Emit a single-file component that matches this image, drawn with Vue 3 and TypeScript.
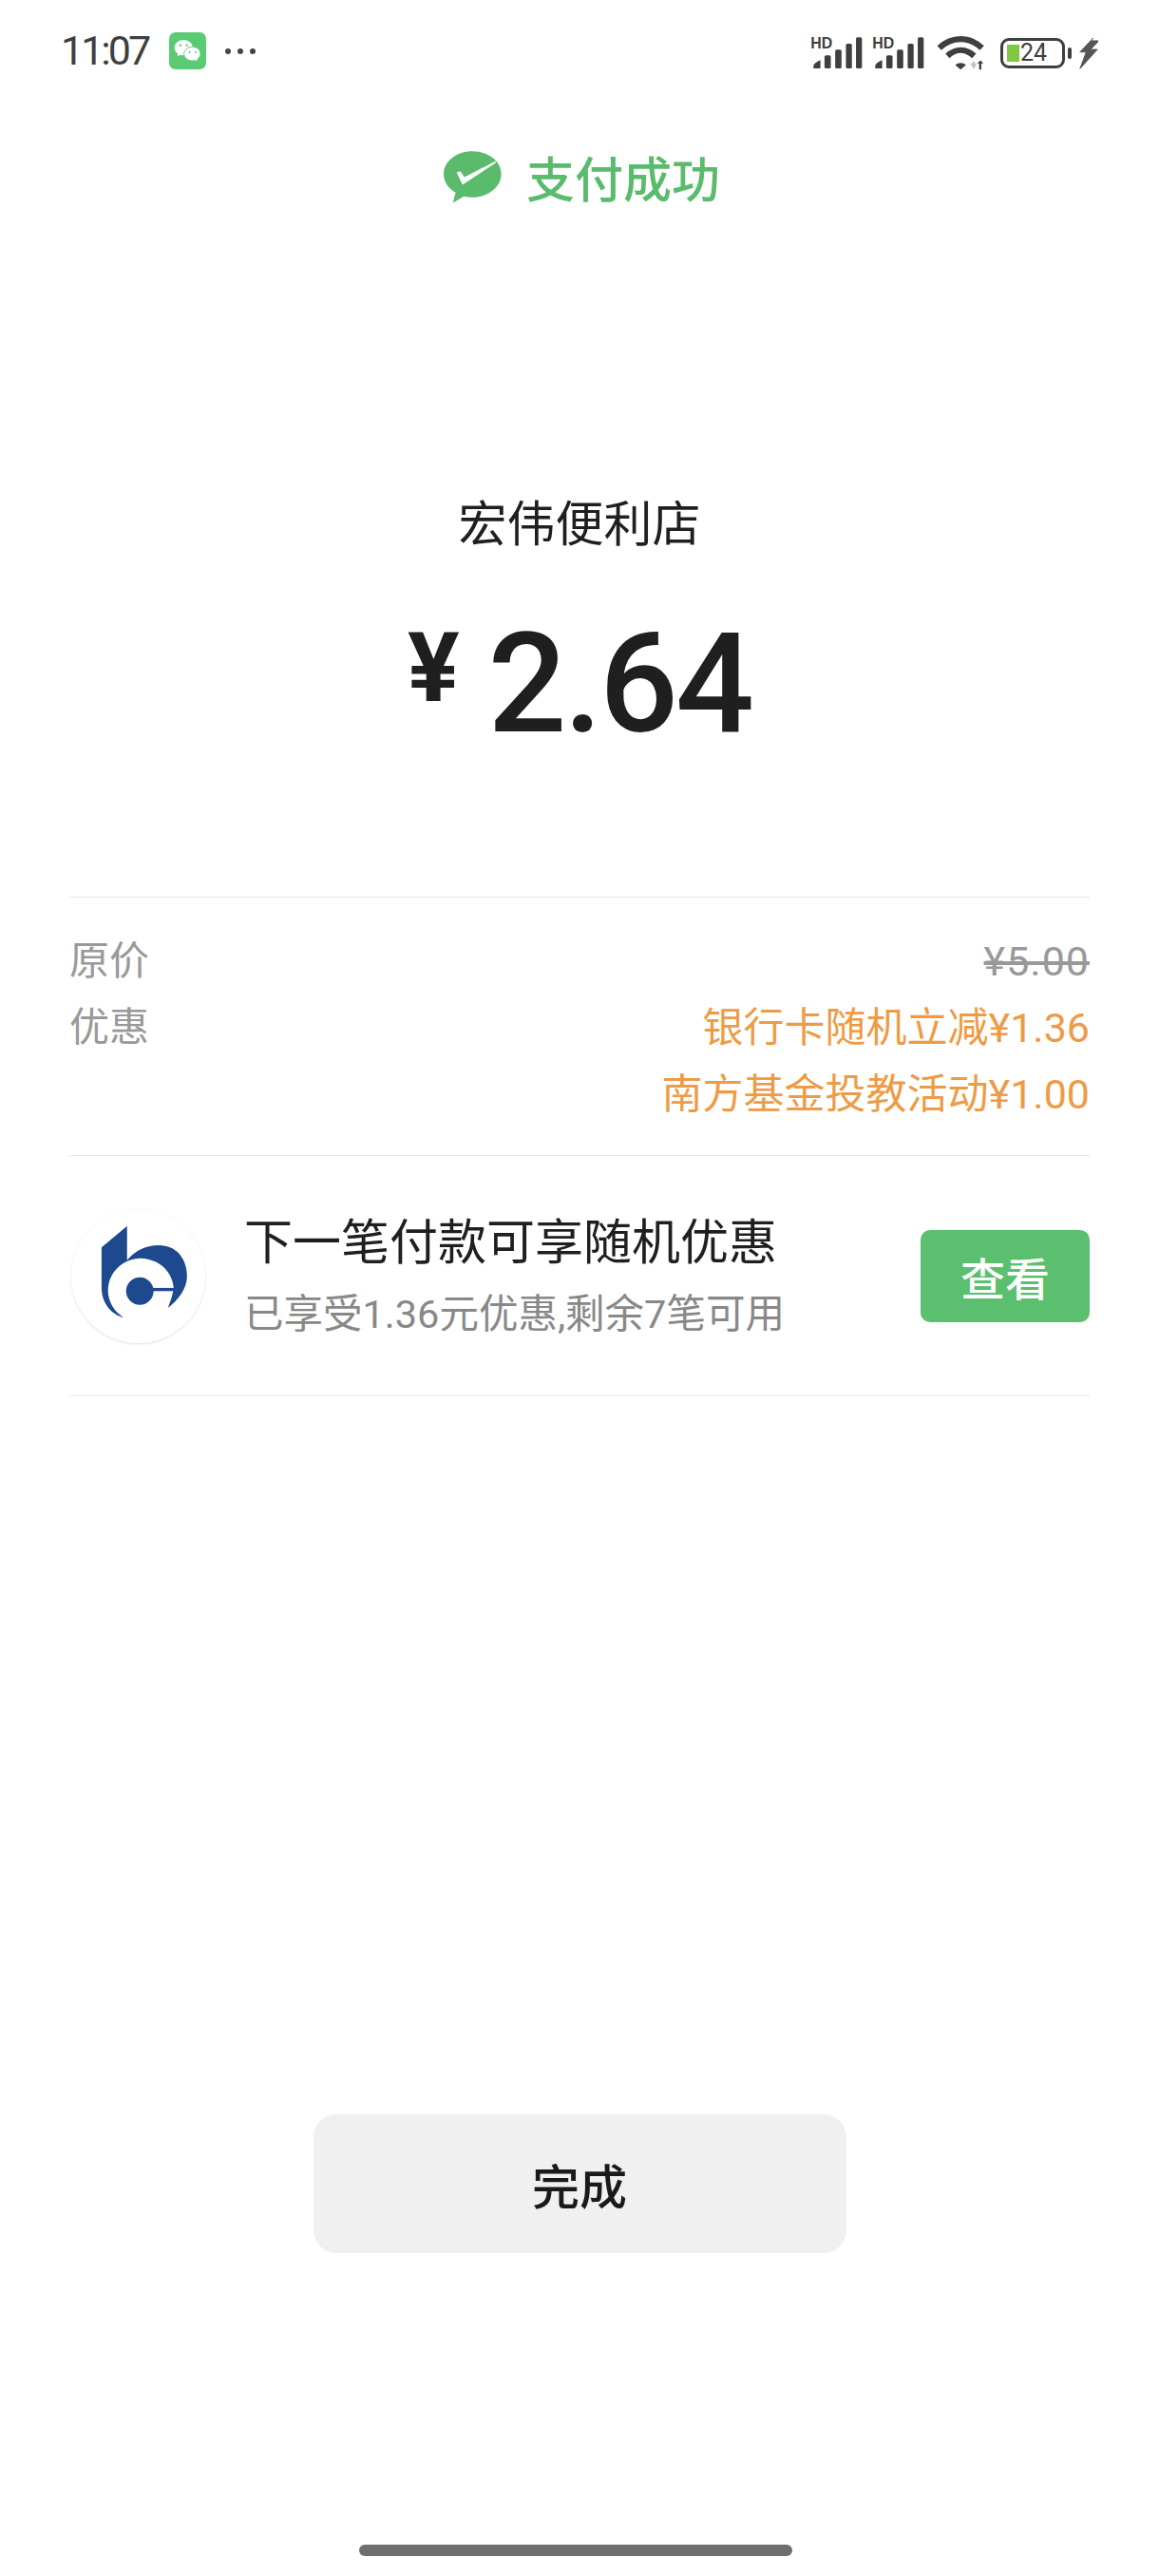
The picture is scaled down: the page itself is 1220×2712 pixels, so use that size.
<script setup lang="ts">
const signals = [0, 1];
</script>

<template>
  <div class="page">
    <div class="status-bar">
      <div class="status-left">
        <span class="time">11:07</span>
        <svg class="app-icon" viewBox="534 102 117 117">
          <rect x="534" y="102" width="117" height="117" rx="20" fill="#5acb74" />
          <path d="M580 126c-16 0-29 11-29 25 0 8 4 14 11 19l-2 8 9-5c4 1 7 2 11 2 16 0 29-11 29-24s-13-25-29-25z" fill="#fff" />
          <path d="M608 148c-15 0-27 10-27 22s12 22 27 22c3 0 6 0 9-1l8 4-2-7c6-4 10-11 10-18 0-12-11-22-25-22z" fill="#fff" stroke="#5acb74" stroke-width="3" />
          <circle cx="570" cy="143" r="3.5" fill="#5acb74" />
          <circle cx="590" cy="143" r="3.5" fill="#5acb74" />
          <circle cx="599" cy="164" r="3" fill="#5acb74" />
          <circle cx="618" cy="164" r="3" fill="#5acb74" />
        </svg>
        <div class="dots"><i></i><i></i><i></i></div>
      </div>
      <div class="status-right">
        <svg v-for="s in signals" :key="s" class="signal" viewBox="98 110 166 104">
          <text x="99" y="147" class="hd">HD</text>
          <path d="M108 212v-9c0-5 12-15 22-17v26z" fill="#3f3f3f" />
          <rect x="143" y="170" width="20" height="42" rx="5" fill="#3f3f3f" />
          <rect x="177" y="152" width="20" height="60" rx="5" fill="#3f3f3f" />
          <rect x="211" y="133" width="19" height="79" rx="5" fill="#3f3f3f" />
          <rect x="243" y="113" width="19" height="99" rx="5" fill="#3f3f3f" />
        </svg>
        <svg class="wifi" viewBox="498 106 152 112">
          <path d="M505 147c40-38 96-38 136 0" fill="none" stroke="#3f3f3f" stroke-width="19" />
          <path d="M531 172c27-24 58-24 85 0" fill="none" stroke="#3f3f3f" stroke-width="19" />
          <path d="M556 201c11-9 24-9 34 0l-17 15z" fill="#3f3f3f" />
          <path d="M604 196h7v-6h7v6h7l-10 20z" fill="#c4c4c4" />
          <path d="M626 196l10-10 10 10h-7v20h-7v-20z" fill="#3f3f3f" />
        </svg>
        <div class="battery">
          <div class="battery-body">
            <i class="battery-fill"></i>
            <span>24</span>
          </div>
          <i class="battery-tip"></i>
        </div>
        <svg class="bolt" viewBox="948 110 60 104">
          <path d="M993 113l-43 45h20l-20 54 56-62h-22l27-28h-27z" fill="#555" stroke="#555" stroke-width="3" />
        </svg>
      </div>
    </div>

    <div class="pay-head">
      <svg class="pay-logo" viewBox="85 90 184 166">
        <path d="M176 91c-50 0-91 32-91 72 0 25 15 46 38 59l-9 33 35-21c9 2 18 3 27 3 50 0 92-33 92-74s-42-72-92-72z" fill="#5abb6c" />
        <path d="M126 158l12-4 13 19 99-51 0 6-105 69z" fill="#fff" />
      </svg>
      <span class="pay-title">支付成功</span>
    </div>

    <div class="store">宏伟便利店</div>
    <div class="amount">
      <span class="yen">¥</span>
      <span class="value">2.64</span>
    </div>

    <div class="price-block">
      <div class="price-row">
        <span class="price-label">原价</span>
        <span class="origin">¥5.00</span>
      </div>
      <div class="price-row">
        <span class="price-label">优惠</span>
        <div class="discounts">
          <div>银行卡随机立减¥1.36</div>
          <div>南方基金投教活动¥1.00</div>
        </div>
      </div>
    </div>

    <div class="promo">
      <div class="bank-logo">
        <svg viewBox="15 15 420 420" width="141" height="141">
          <path d="M110 135L190 68V175C215 145 250 128 290 128C345 128 378 170 378 225C378 265 350 300 318 325C325 305 332 290 336 262A103 100 0 1 0 180 355C140 345 110 310 110 260Z" fill="#1d4a8f" />
          <circle cx="230" cy="272" r="43" fill="#1d4a8f" />
          <rect x="265" y="262" width="72" height="10" fill="#1d4a8f" />
        </svg>
      </div>
      <div class="promo-text">
        <div class="promo-title">下一笔付款可享随机优惠</div>
        <div class="promo-sub">已享受1.36元优惠,剩余7笔可用</div>
      </div>
      <button class="view-btn">查看</button>
    </div>

    <div class="spacer"></div>
    <button class="done-btn">完成</button>
    <div class="home-wrap"><div class="home-bar"></div></div>
  </div>
</template>

<style>
html,
body {
  margin: 0;
  background: #fff;
}
</style>

<style scoped>
.page {
  width: 1220px;
  height: 2712px;
  display: flex;
  flex-direction: column;
  background: #fff;
  font-family: Roboto, "Noto Sans CJK SC", sans-serif;
  box-sizing: border-box;
  overflow: hidden;
}

.status-bar {
  height: 104px;
  flex-shrink: 0;
  display: flex;
  justify-content: space-between;
  align-items: flex-start;
  padding: 34px 64px 0 64px;
  box-sizing: border-box;
}

.status-left,
.status-right {
  display: flex;
  align-items: center;
  height: 39px;
}

.time {
  font-size: 43px;
  line-height: 39px;
  color: #3f3f3f;
  width: 114px;
  letter-spacing: -3px;
}

.app-icon {
  width: 39px;
  height: 39px;
}

.dots {
  display: flex;
  gap: 7px;
  margin-left: 20px;
}

.dots i {
  width: 6px;
  height: 6px;
  border-radius: 50%;
  background: #444;
}

.status-right {
  margin-top: 2px;
}

.signal {
  width: 55px;
  height: 35px;
  margin-right: 10px;
}

.hd {
  font: 700 48px "Liberation Sans", sans-serif;
  fill: #3f3f3f;
}

.wifi {
  width: 51px;
  height: 37px;
  margin-left: 3px;
}

.battery {
  display: flex;
  align-items: center;
  margin-left: 16px;
}

.battery-body {
  width: 68px;
  height: 32px;
  border: 3px solid #3f3f3f;
  border-radius: 9px;
  box-sizing: border-box;
  display: flex;
  align-items: center;
  padding-left: 4px;
}

.battery-fill {
  width: 13px;
  height: 18px;
  background: #7ec842;
}

.battery-body span {
  font-size: 25px;
  line-height: 26px;
  color: #3f3f3f;
  margin-left: 1px;
}

.battery-tip {
  width: 4px;
  height: 12px;
  margin-left: 3px;
  border-radius: 2px;
  background: #3f3f3f;
}

.bolt {
  width: 20px;
  height: 34px;
  margin-left: 8px;
}

.pay-head {
  display: flex;
  justify-content: center;
  align-items: center;
  gap: 26px;
  height: 70px;
  margin-top: 47px;
  padding-left: 5px;
}

.pay-logo {
  width: 61px;
  height: 55px;
}

.pay-title {
  font-size: 51px;
  font-weight: 500;
  color: #5abb6c;
}

.store {
  margin-top: 297px;
  text-align: center;
  font-size: 51px;
  line-height: 70px;
  color: #1f1f1f;
}

.amount {
  display: flex;
  justify-content: center;
  align-items: flex-start;
  height: 180px;
  margin-top: 43px;
  color: #1f1f1f;
}

.yen {
  font-size: 102px;
  font-weight: 700;
  line-height: 120px;
  margin-top: 12px;
  margin-right: 30px;
}

.value {
  font-size: 146px;
  font-weight: 500;
  line-height: 180px;
  letter-spacing: -3px;
}

.price-block {
  margin: 133px 73px 0;
  padding: 32px 0 29px;
  border-top: 1px solid #e8e8e8;
  border-bottom: 1px solid #e8e8e8;
  font-size: 43px;
  line-height: 70px;
}

.price-row {
  display: flex;
  justify-content: space-between;
}

.price-label {
  color: #999;
  font-size: 42px;
}

.origin {
  color: #999;
  letter-spacing: 1px;
  text-decoration: line-through;
}

.discounts {
  text-align: right;
  color: #ee9b45;
}

.promo {
  margin: 0 73px;
  height: 253px;
  display: flex;
  align-items: center;
  border-bottom: 1px solid #e8e8e8;
  box-sizing: border-box;
}

.bank-logo {
  width: 141px;
  height: 141px;
  border-radius: 50%;
  box-shadow: 0 1px 3px rgba(0, 0, 0, 0.12);
  flex-shrink: 0;
  margin-left: 2px;
}

.promo-text {
  flex: 1;
  margin-left: 41px;
}

.promo-title {
  font-size: 51px;
  line-height: 70px;
  color: #1f1f1f;
}

.promo-sub {
  font-size: 41.5px;
  line-height: 56px;
  margin-top: 12px;
  color: #888;
}

.view-btn {
  width: 178px;
  height: 97px;
  border: none;
  border-radius: 10px;
  background: #5abf6e;
  color: #fff;
  font-family: inherit;
  font-size: 47px;
  font-weight: 500;
}

.spacer {
  flex: 1;
}

.done-btn {
  align-self: center;
  width: 561px;
  height: 146px;
  border: none;
  border-radius: 24px;
  background: #f0f0f0;
  color: #1a1a1a;
  font-family: inherit;
  font-size: 50px;
  font-weight: 500;
}

.home-wrap {
  height: 340px;
  display: flex;
  align-items: flex-end;
  justify-content: center;
  padding: 0 8px 21px 0;
  box-sizing: border-box;
}

.home-bar {
  width: 456px;
  height: 12px;
  border-radius: 6px;
  background: #6e6e6e;
}
</style>
